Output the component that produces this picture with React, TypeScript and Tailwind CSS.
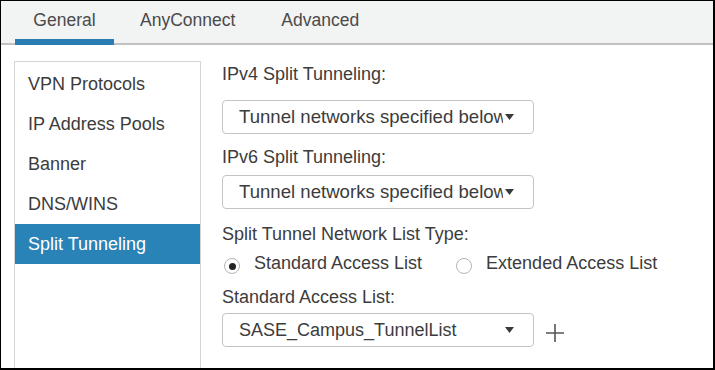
import React from 'react';

const font = { fontFamily: '"Liberation Sans", Arial, sans-serif' };

const navItems = ['VPN Protocols', 'IP Address Pools', 'Banner', 'DNS/WINS', 'Split Tunneling'];

const Caret = () => (
  <svg width="9" height="6" viewBox="0 0 9 6" className="shrink-0">
    <path d="M0 0 L9 0 L4.5 6 Z" fill="#3a3a3a" />
  </svg>
);

const SelectBox = ({ value, wide }: { value: string; wide?: boolean }) => (
  <div className="flex items-center w-[312px] h-[34px] border border-[#c4c4c4] rounded-[4px] bg-white pl-[16px] pr-[19px]">
    <span
      className={`overflow-hidden whitespace-nowrap text-[#3c3c3c] ${
        wide ? 'flex-1 text-[18px]' : 'w-[265px] text-[18.6px]'
      }`}
    >
      {value}
    </span>
    <span className={wide ? 'ml-2' : 'ml-[2px]'}>
      <Caret />
    </span>
  </div>
);

const Radio = ({ checked, label }: { checked?: boolean; label: string }) => (
  <label className="flex items-center">
    <span className="w-[16px] h-[16px] rounded-full border border-[#b5b5b5] bg-white flex items-center justify-center mt-[6px]">
      {checked && <span className="w-[7px] h-[7px] rounded-full bg-[#222]" />}
    </span>
    <span className="ml-[14px] text-[18px] text-[#3c3c3c]">{label}</span>
  </label>
);

export default function App() {
  return (
    <div
      style={font}
      className="w-[715px] h-[370px] overflow-hidden bg-white border-t border-l border-r-2 border-b-2 border-black flex flex-col"
    >
      {/* Tabs */}
      <div className="h-[44px] shrink-0 bg-[#f2f3f3] border-b-2 border-[#c2c2c2] flex items-end pl-[14px] gap-[6px]">
        <div className="relative w-[99px] h-full flex items-center justify-center text-[17.5px] text-[#4a4a4a] pb-[4px]">
          General
          <div className="absolute left-0 right-0 bottom-[-2px] h-[6px] bg-[#2a7db3]" />
        </div>
        <div className="h-full flex items-center px-[20px] text-[17.5px] text-[#4a4a4a] pb-[4px]">AnyConnect</div>
        <div className="h-full flex items-center px-[20px] text-[17.5px] text-[#4a4a4a] pb-[4px]">Advanced</div>
      </div>

      {/* Body */}
      <div className="flex flex-1 pl-[13px] pt-[16px]">
        <div className="w-[187px] shrink-0 border border-b-0 border-[#d4d4d4] pt-[2px]">
          {navItems.map((item) => {
            const active = item === 'Split Tunneling';
            return (
              <div
                key={item}
                className={`h-[40px] flex items-center pl-[13px] text-[18px] ${
                  active ? 'bg-[#2a83b6] text-white' : 'text-[#3c3c3c]'
                }`}
              >
                {item}
              </div>
            );
          })}
        </div>

        <div className="ml-[21px] flex flex-col text-[18px] text-[#3c3c3c]">
          <div className="h-[26px] flex items-center">IPv4 Split Tunneling:</div>
          <div className="mt-[13px]">
            <SelectBox value="Tunnel networks specified below" />
          </div>
          <div className="mt-[10px] h-[26px] flex items-center">IPv6 Split Tunneling:</div>
          <div className="mt-[5px]">
            <SelectBox value="Tunnel networks specified below" />
          </div>
          <div className="mt-[12px] h-[26px] flex items-center">Split Tunnel Network List Type:</div>
          <div className="mt-[2px] h-[28px] flex items-center gap-[34px] pl-[2px]">
            <Radio checked label="Standard Access List" />
            <Radio label="Extended Access List" />
          </div>
          <div className="mt-[7px] h-[26px] flex items-center">Standard Access List:</div>
          <div className="mt-[3px] flex items-center">
            <SelectBox value="SASE_Campus_TunnelList" wide />
            <svg width="18" height="18" viewBox="0 0 18 18" className="ml-[12px] mt-[6px]">
              <path d="M9 0 V18 M0 9 H18" stroke="#555" strokeWidth="1.6" />
            </svg>
          </div>
        </div>
      </div>
    </div>
  );
}
